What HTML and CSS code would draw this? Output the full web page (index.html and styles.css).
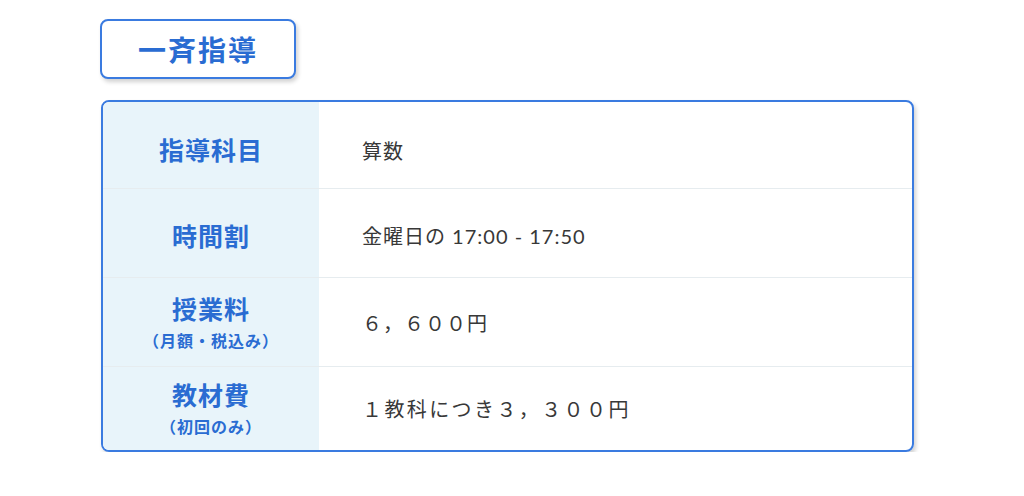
FILE: index.html
```html
<!DOCTYPE html>
<html>
<head>
  <title>一斉指導</title>
  <meta name="viewport" content="width=device-width, initial-scale=1.0" />
  <link rel="stylesheet" href="styles.css">
</head>
<body>
  <div class="page">
    <h2 class="course-title">一斉指導</h2>

    <div class="info-table">
      <div class="row">
        <div class="label">指導科目</div>
        <div class="value">算数</div>
      </div>
      <div class="row">
        <div class="label">時間割</div>
        <div class="value">金曜日の 17:00 - 17:50</div>
      </div>
      <div class="row">
        <div class="label">授業料<span class="note">（月額・税込み）</span></div>
        <div class="value">６，６００円</div>
      </div>
      <div class="row">
        <div class="label">教材費<span class="note">（初回のみ）</span></div>
        <div class="value wide">１教科につき３，３００円</div>
      </div>
    </div>
  </div>
</body>
</html>
```

FILE: styles.css
```css
body { margin: 0; background: #fff; font-family: "Lato", "Noto Sans CJK JP", sans-serif; color: #333; }
.page { padding: 19px 0 0 101px; }
.course-title { box-sizing: border-box; width: 196px; height: 60px; margin: 0 0 21px -1px; display: flex; align-items: center; justify-content: center; border: 2px solid #3a7be0; border-radius: 8px; box-shadow: 2px 3px 4px rgba(0,0,0,0.18); background: #fff; color: #2a6cd2; font-size: 28px; font-weight: 700; letter-spacing: 2px; }
.info-table { box-sizing: border-box; width: 813px; border: 2px solid #3a7be0; border-radius: 8px; box-shadow: 2px 3px 4px rgba(0,0,0,0.18); overflow: hidden; }
.row { box-sizing: border-box; display: flex; height: 89px; border-top: 1px solid #e6ecef; }
.row:first-child { border-top: none; height: 86px; }
.row:first-child > * { padding-top: 10px; }
.row:nth-child(2) > * { padding-top: 5px; }
.row:last-child { height: 84px; }
.label { width: 216px; background: #e8f4fa; color: #2a6cd2; font-size: 25px; font-weight: 700; letter-spacing: 1px; display: flex; flex-direction: column; align-items: center; justify-content: center; line-height: 1.2; }
.note { font-size: 16px; letter-spacing: 1px; margin-top: 7px; }
.value { flex: 1; display: flex; align-items: center; padding-left: 43px; font-size: 20px; letter-spacing: 1px; color: #383838; }
.value.wide { letter-spacing: 2.4px; }
```
